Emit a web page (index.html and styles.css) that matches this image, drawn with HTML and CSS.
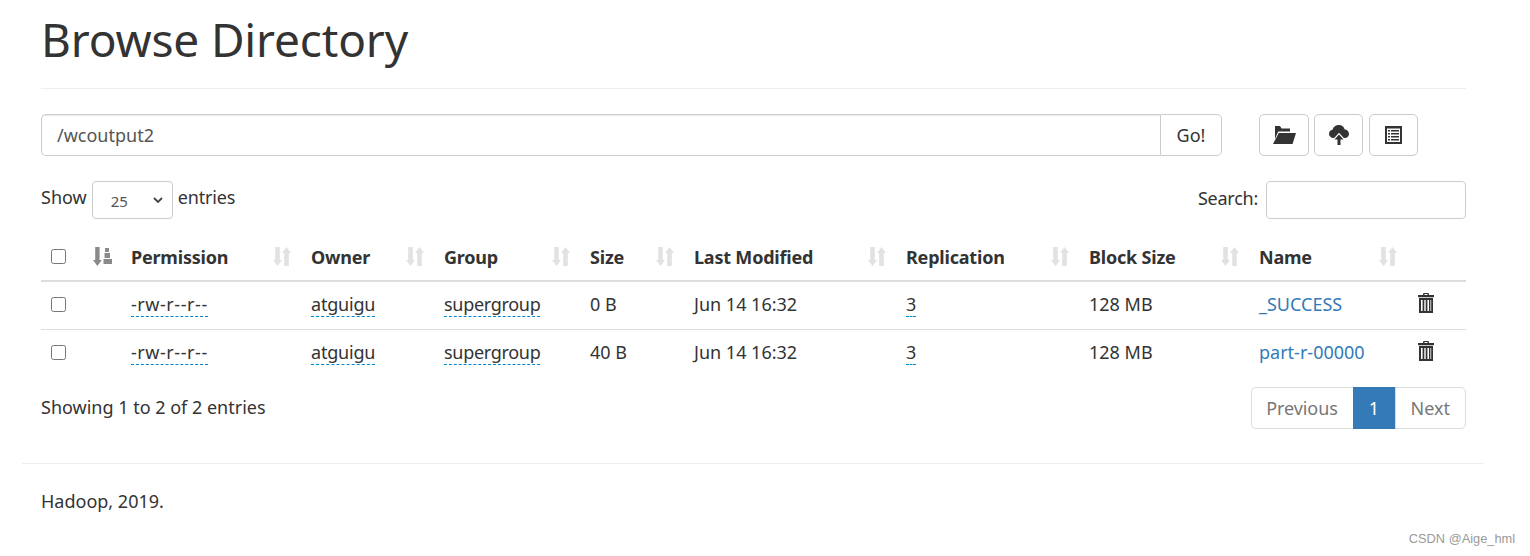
FILE: index.html
```html
<!DOCTYPE html>
<html lang="en">
<head>
<meta charset="utf-8">
<title>Browse Directory</title>
<link rel="stylesheet" href="styles.css">
</head>
<body>
<svg class="defs" width="0" height="0" aria-hidden="true">
  <symbol id="i-sort" viewBox="0 0 18 19">
    <path d="M2.200 0h4.600v13H9L4.500 19 0 13h2.200z"/>
    <path d="M13.500 0L18 6h-2.200v13h-4.600V6H9z"/>
  </symbol>
  <symbol id="i-trash" viewBox="0 0 18 20">
    <path d="M6.500 0h5l.7 2H17v2.200H1V2h4.800zM7.600 1.100l-.3.900h3.400l-.3-.9z"/>
    <path fill-rule="evenodd" d="M2 5h14v15H2zM4 7v11h1.600V7zM7.300 7v11h1.400V7zM10.400 7v11H12V7zM13.400 7v11h.8V7z"/>
  </symbol>
</svg>
<div class="container">
  <header class="page-header"><h1>Browse Directory</h1></header>

  <div class="toolbar">
    <div class="path-group">
      <input class="path-input" type="text" value="/wcoutput2">
      <button class="go-btn" type="button">Go!</button>
    </div>
    <div class="actions">
      <button class="icon-btn btn-folder" type="button" aria-label="Create directory">
        <svg width="23" height="18" viewBox="0 0 23 18"><path d="M2 0h5l1.500 2.500H17v3H5.200L2 13V0z"/><path d="M5.800 7H23l-3.400 11H0z"/></svg>
      </button>
      <button class="icon-btn btn-upload" type="button" aria-label="Upload files">
        <svg width="20" height="20" viewBox="0 0 20 20"><path d="M10 0c3 0 5 1.700 5.500 4.300C18 4.600 20 6.500 20 9c0 2.300-1.800 4-4 4h-1.200L10 7.800 5.200 13H4.500C2 13 0 11.200 0 8.800 0 6.700 1.500 5 3.500 4.800 4.200 2 6.800 0 10 0z"/><path d="M10 9.500l4.500 5H11.500V20h-3v-5.500H5.500z"/></svg>
      </button>
      <button class="icon-btn btn-list" type="button" aria-label="Cut and paste">
        <svg width="17" height="18" viewBox="0 0 17 18"><path fill-rule="evenodd" d="M0 0h17v18H0zM2 2.500v13.500h13V2.500zM3 4h2v1.500H3zM6 4h8v1.500H6zM3 7h2v1.500H3zM6 7h8v1.500H6zM3 10h2v1.500H3zM6 10h8v1.500H6zM3 13h2v1.500H3zM6 13h8v1.500H6z"/></svg>
      </button>
    </div>
  </div>

  <div class="table-controls">
    <label class="length"><span class="lbl">Show</span>
      <span class="select-box">
        <span class="select-value">25</span>
        <svg width="10" height="6" viewBox="0 0 10 6"><path d="M1 1l4 4 4-4" fill="none" stroke="#444" stroke-width="1.800"/></svg>
      </span>
      <span class="lbl entries">entries</span></label>
    <label class="search"><span class="lbl">Search:</span> <input class="search-input" type="text"></label>
  </div>

  <table class="files">
    <thead>
      <tr>
        <th class="c-check"><input type="checkbox"></th>
        <th class="c-sort"><svg class="sort-active" width="19" height="19" viewBox="0 0 19 19"><path d="M2.200 0h4.400v13h2.200L4.400 19 0 13h2.200z"/><path d="M12 1h4v4h-4zM11.500 6h5.500v5h-5.500zM10.500 12H19v5h-8.500z"/></svg></th>
        <th class="c-perm"><div class="th-in"><span>Permission</span><svg class="sort"><use href="#i-sort"/></svg></div></th>
        <th class="c-owner"><div class="th-in"><span>Owner</span><svg class="sort"><use href="#i-sort"/></svg></div></th>
        <th class="c-group"><div class="th-in"><span>Group</span><svg class="sort"><use href="#i-sort"/></svg></div></th>
        <th class="c-size"><div class="th-in"><span>Size</span><svg class="sort"><use href="#i-sort"/></svg></div></th>
        <th class="c-mod"><div class="th-in"><span>Last Modified</span><svg class="sort"><use href="#i-sort"/></svg></div></th>
        <th class="c-rep"><div class="th-in"><span>Replication</span><svg class="sort"><use href="#i-sort"/></svg></div></th>
        <th class="c-block"><div class="th-in"><span>Block Size</span><svg class="sort"><use href="#i-sort"/></svg></div></th>
        <th class="c-name"><div class="th-in"><span>Name</span><svg class="sort"><use href="#i-sort"/></svg></div></th>
        <th class="c-del"></th>
      </tr>
    </thead>
    <tbody>
      <tr>
        <td><input type="checkbox"></td><td></td>
        <td><span class="editable perm">-rw-r--r--</span></td>
        <td><span class="editable owner">atguigu</span></td>
        <td><span class="editable group">supergroup</span></td>
        <td>0 B</td>
        <td>Jun 14 16:32</td>
        <td><span class="editable">3</span></td>
        <td>128 MB</td>
        <td><a href="#">_SUCCESS</a></td>
        <td><svg class="trash"><use href="#i-trash"/></svg></td>
      </tr>
      <tr>
        <td><input type="checkbox"></td><td></td>
        <td><span class="editable perm">-rw-r--r--</span></td>
        <td><span class="editable owner">atguigu</span></td>
        <td><span class="editable group">supergroup</span></td>
        <td>40 B</td>
        <td>Jun 14 16:32</td>
        <td><span class="editable">3</span></td>
        <td>128 MB</td>
        <td><a href="#">part-r-00000</a></td>
        <td><svg class="trash"><use href="#i-trash"/></svg></td>
      </tr>
    </tbody>
  </table>

  <div class="table-footer">
    <div class="info">Showing 1 to 2 of 2 entries</div>
    <nav class="pager">
      <a class="page first" href="#">Previous</a><a class="page current" href="#">1</a><a class="page last" href="#">Next</a>
    </nav>
  </div>
</div>
<footer class="site-footer"><p>Hadoop, 2019.</p></footer>
<div class="watermark">CSDN @Aige_hml</div>
</body>
</html>
```
FILE: styles.css
```css
* { box-sizing: border-box; }
html, body { margin: 0; height: 100%; }
body {
  font-family: "Noto Sans", "Open Sans", sans-serif;
  font-size: 18px;
  line-height: 26px;
  color: #333;
  background: #fff;
  position: relative;
  overflow: hidden;
}
.defs { position: absolute; }
.container { margin: 0 64px 0 41px; }
.page-header { height: 89px; border-bottom: 1px solid #eee; }
h1 {
  margin: 0;
  padding-top: 13px;
  font-size: 46px;
  line-height: 52px;
  font-weight: 400;
  letter-spacing: -.15px;
  color: #333;
}
.toolbar { display: flex; margin-top: 25px; height: 42px; }
.path-group { display: flex; width: 1181px; }
.path-input {
  flex: 1;
  min-width: 0;
  height: 42px;
  padding: 0 15px;
  border: 1px solid #ccc;
  border-right: 0;
  border-radius: 5px 0 0 5px;
  font: inherit;
  color: #555;
  box-shadow: inset 0 1px 1px rgba(0,0,0,.08);
}
.go-btn {
  width: 62px;
  height: 42px;
  border: 1px solid #ccc;
  border-radius: 0 5px 5px 0;
  background: #fff;
  font: inherit;
  color: #333;
  padding: 0;
}
.actions { display: flex; gap: 5px; margin-left: 37px; }
.icon-btn {
  display: flex;
  align-items: center;
  justify-content: center;
  width: 49px;
  height: 42px;
  padding: 0;
  border: 1px solid #ccc;
  border-radius: 5px;
  background: #fff;
}
.icon-btn svg { fill: #333; }
.btn-folder { width: 50px; }
.btn-list { margin-left: 1px; }
.table-controls {
  display: flex;
  justify-content: space-between;
  align-items: center;
  margin-top: 25px;
  height: 38px;
}
.length, .search { display: flex; align-items: center; gap: 5px; }
.length { height: 38px; }
.length .lbl { margin-bottom: 6px; }
.entries { letter-spacing: -.15px; }
.search .lbl { margin-bottom: 4px; letter-spacing: -.25px; }
.select-box {
  display: flex;
  align-items: center;
  justify-content: space-between;
  width: 81px;
  height: 38px;
  padding: 0 9px 0 18px;
  border: 1px solid #ccc;
  border-radius: 4px;
  font-size: 15px;
  color: #555;
}
.select-value { position: relative; top: 1px; }
.search-input {
  width: 200px;
  height: 38px;
  margin-left: 3px;
  border: 1px solid #ccc;
  border-radius: 4px;
}
.files {
  width: 1425px;
  margin-top: 15px;
  border-collapse: collapse;
  table-layout: fixed;
}
th, td { padding: 0 0 0 10px; text-align: left; vertical-align: middle; }
th { height: 47px; font-weight: 700; border-bottom: 2px solid #ddd; letter-spacing: -.2px; }
td { height: 48px; padding-bottom: 2px; }
tbody tr:first-child td { border-bottom: 1px solid #ddd; }
td input, th input { margin: 0; width: 15px; height: 15px; display: block; }
th input { position: relative; top: -1px; }
.c-check { width: 40px; }
.c-sort { width: 40px; }
.c-perm { width: 180px; }
.c-owner { width: 133px; }
.c-group { width: 146px; }
.c-size { width: 104px; }
.c-mod { width: 212px; }
.c-rep { width: 183px; }
.c-block { width: 170px; }
.c-name { width: 158px; }
.th-in { display: flex; justify-content: space-between; align-items: center; padding-right: 10px; }
.sort { width: 18px; height: 19px; fill: #e2e2e2; position: relative; top: -1px; }
.sort-active { fill: #8a8a8a; position: relative; top: -1px; left: 2px; display: block; }
.editable { border-bottom: 1px dashed #08c; display: inline-block; line-height: 23px; }
.perm { letter-spacing: .55px; }
.owner { letter-spacing: -.2px; }
.group { letter-spacing: -.3px; }
a { color: #337ab7; text-decoration: none; }
.trash { width: 18px; height: 20px; fill: #333; display: block; position: relative; top: -1px; }
.table-footer {
  display: flex;
  justify-content: space-between;
  align-items: center;
  margin-top: 10px;
  height: 42px;
  width: 1425px;
}
.info { padding-bottom: 2px; }
.pager { display: flex; }
.page {
  height: 42px;
  line-height: 40px;
  padding: 0 15px;
  border: 1px solid #ddd;
  margin-left: -1px;
  background: #fff;
  color: #777;
}
.first { border-radius: 5px 0 0 5px; width: 103px; padding: 0; text-align: center; letter-spacing: -.1px; }
.last { border-radius: 0 5px 5px 0; }
.current { background: #337ab7; border-color: #337ab7; color: #fff; width: 43px; text-align: center; padding: 0; }
.site-footer {
  margin: 34px 46px 0 22px;
  border-top: 1px solid #eee;
  padding: 24px 19px 0;
}
.site-footer p { margin: 0; }
.watermark {
  position: absolute;
  right: 15px;
  top: 531px;
  font-family: "Liberation Sans", sans-serif;
  font-size: 12.800px;
  line-height: 16px;
  color: #9a9a9a;
}
```
